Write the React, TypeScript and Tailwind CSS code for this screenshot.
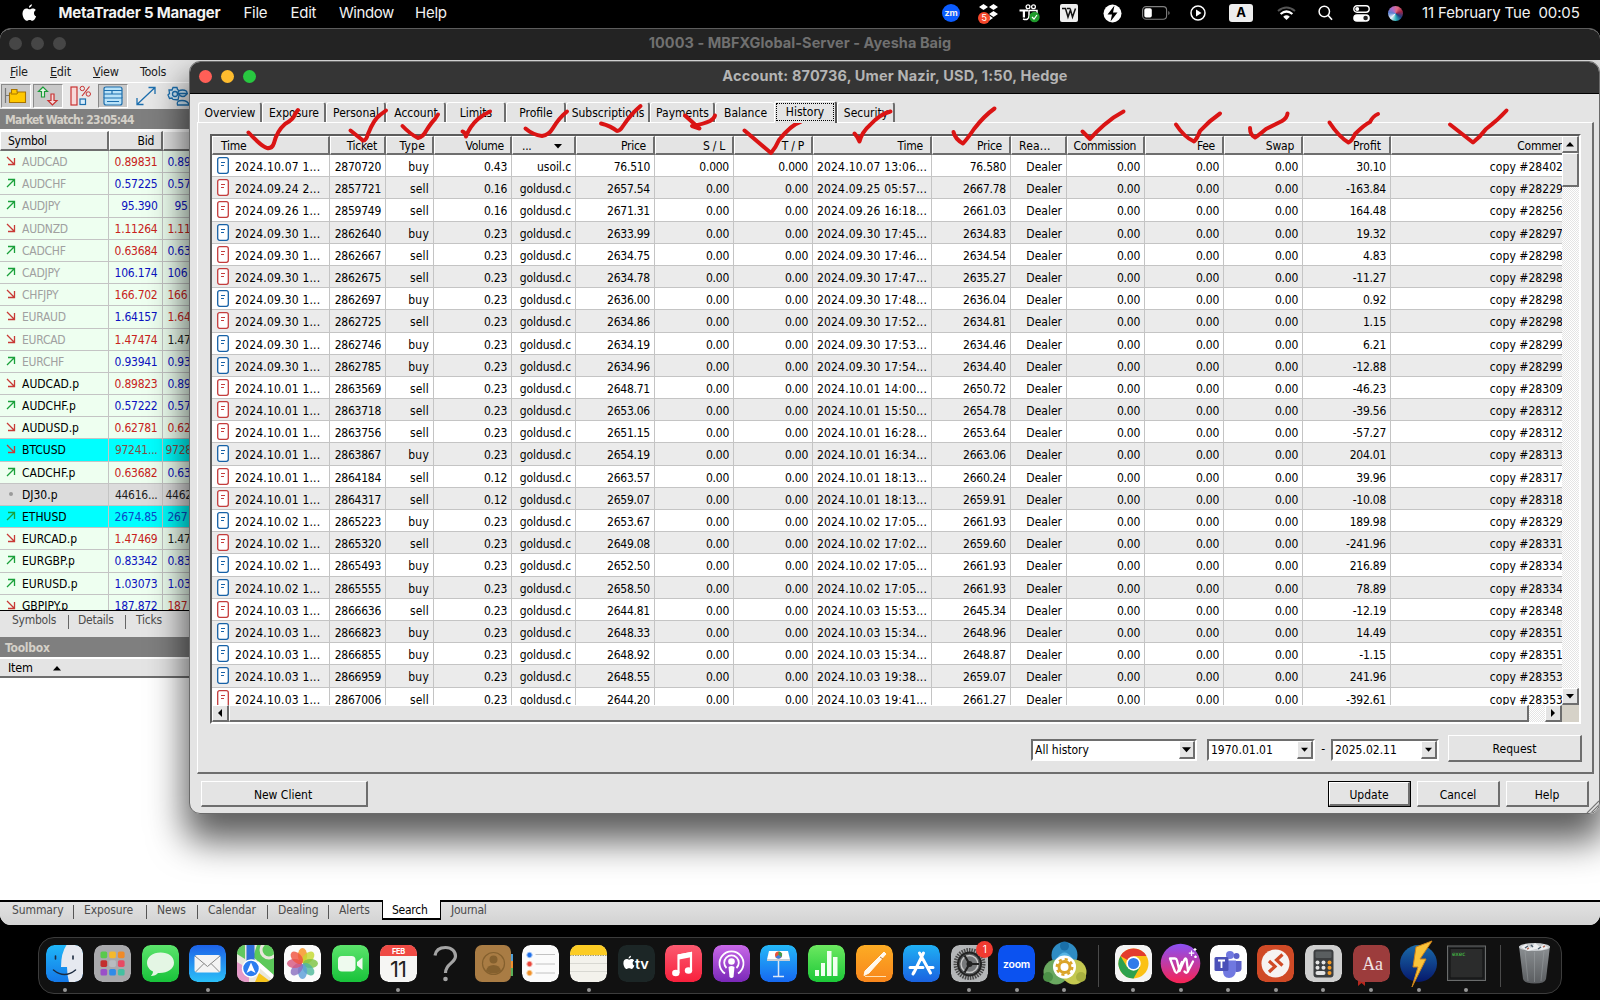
import React from "react";

type Deal = [string, string, string, string, string, string, string, string, string, string, string];

// open time, ticket, type, volume, symbol, open price, sl/tp, close time, close price, profit, comment
const deals: Deal[] = [
  ["2024.10.07 1...", "2870720", "buy", "0.43", "usoil.c", "76.510", "0.000", "2024.10.07 13:06...", "76.580", "30.10", "28402"],
  ["2024.09.24 2...", "2857721", "sell", "0.16", "goldusd.c", "2657.54", "0.00", "2024.09.25 05:57...", "2667.78", "-163.84", "28229"],
  ["2024.09.26 1...", "2859749", "sell", "0.16", "goldusd.c", "2671.31", "0.00", "2024.09.26 16:18...", "2661.03", "164.48", "28256"],
  ["2024.09.30 1...", "2862640", "buy", "0.23", "goldusd.c", "2633.99", "0.00", "2024.09.30 17:45...", "2634.83", "19.32", "28297"],
  ["2024.09.30 1...", "2862667", "sell", "0.23", "goldusd.c", "2634.75", "0.00", "2024.09.30 17:46...", "2634.54", "4.83", "28298"],
  ["2024.09.30 1...", "2862675", "sell", "0.23", "goldusd.c", "2634.78", "0.00", "2024.09.30 17:47...", "2635.27", "-11.27", "28298"],
  ["2024.09.30 1...", "2862697", "buy", "0.23", "goldusd.c", "2636.00", "0.00", "2024.09.30 17:48...", "2636.04", "0.92", "28298"],
  ["2024.09.30 1...", "2862725", "sell", "0.23", "goldusd.c", "2634.86", "0.00", "2024.09.30 17:52...", "2634.81", "1.15", "28298"],
  ["2024.09.30 1...", "2862746", "buy", "0.23", "goldusd.c", "2634.19", "0.00", "2024.09.30 17:53...", "2634.46", "6.21", "28299"],
  ["2024.09.30 1...", "2862785", "buy", "0.23", "goldusd.c", "2634.96", "0.00", "2024.09.30 17:54...", "2634.40", "-12.88", "28299"],
  ["2024.10.01 1...", "2863569", "sell", "0.23", "goldusd.c", "2648.71", "0.00", "2024.10.01 14:00...", "2650.72", "-46.23", "28309"],
  ["2024.10.01 1...", "2863718", "sell", "0.23", "goldusd.c", "2653.06", "0.00", "2024.10.01 15:50...", "2654.78", "-39.56", "28312"],
  ["2024.10.01 1...", "2863756", "sell", "0.23", "goldusd.c", "2651.15", "0.00", "2024.10.01 16:28...", "2653.64", "-57.27", "28312"],
  ["2024.10.01 1...", "2863867", "buy", "0.23", "goldusd.c", "2654.19", "0.00", "2024.10.01 16:34...", "2663.06", "204.01", "28313"],
  ["2024.10.01 1...", "2864184", "sell", "0.12", "goldusd.c", "2663.57", "0.00", "2024.10.01 18:13...", "2660.24", "39.96", "28317"],
  ["2024.10.01 1...", "2864317", "sell", "0.12", "goldusd.c", "2659.07", "0.00", "2024.10.01 18:13...", "2659.91", "-10.08", "28318"],
  ["2024.10.02 1...", "2865223", "buy", "0.23", "goldusd.c", "2653.67", "0.00", "2024.10.02 17:05...", "2661.93", "189.98", "28329"],
  ["2024.10.02 1...", "2865320", "sell", "0.23", "goldusd.c", "2649.08", "0.00", "2024.10.02 17:02...", "2659.60", "-241.96", "28331"],
  ["2024.10.02 1...", "2865493", "buy", "0.23", "goldusd.c", "2652.50", "0.00", "2024.10.02 17:05...", "2661.93", "216.89", "28334"],
  ["2024.10.02 1...", "2865555", "buy", "0.23", "goldusd.c", "2658.50", "0.00", "2024.10.02 17:05...", "2661.93", "78.89", "28334"],
  ["2024.10.03 1...", "2866636", "sell", "0.23", "goldusd.c", "2644.81", "0.00", "2024.10.03 15:53...", "2645.34", "-12.19", "28348"],
  ["2024.10.03 1...", "2866823", "buy", "0.23", "goldusd.c", "2648.33", "0.00", "2024.10.03 15:34...", "2648.96", "14.49", "28351"],
  ["2024.10.03 1...", "2866855", "buy", "0.23", "goldusd.c", "2648.92", "0.00", "2024.10.03 15:34...", "2648.87", "-1.15", "28351"],
  ["2024.10.03 1...", "2866959", "buy", "0.23", "goldusd.c", "2648.55", "0.00", "2024.10.03 19:38...", "2659.07", "241.96", "28353"],
  ["2024.10.03 1...", "2867006", "sell", "0.23", "goldusd.c", "2644.20", "0.00", "2024.10.03 19:41...", "2661.27", "-392.61", "28353"],
];

const R = "text-[#c8231c]";
const B = "text-[#0c12c0]";
const K = "text-[#1c1c1c]";
const QM = "bg-[#eefff0]";

// symbol, dimmed, direction, bid, bid colour, ask, ask colour, row background
const quotes: [string, boolean, "up" | "down" | "none", string, string, string, string, string][] = [
  ["AUDCAD", true, "down", "0.89831", R, "0.89", B, QM],
  ["AUDCHF", true, "up", "0.57225", B, "0.57", B, QM],
  ["AUDJPY", true, "up", "95.390", B, "95", B, QM],
  ["AUDNZD", true, "down", "1.11264", R, "1.11", R, QM],
  ["CADCHF", true, "up", "0.63684", R, "0.63", B, QM],
  ["CADJPY", true, "up", "106.174", B, "106", B, QM],
  ["CHFJPY", true, "down", "166.702", R, "166", R, QM],
  ["EURAUD", true, "down", "1.64157", B, "1.64", R, QM],
  ["EURCAD", true, "down", "1.47474", R, "1.47", K, QM],
  ["EURCHF", true, "up", "0.93941", B, "0.93", B, QM],
  ["AUDCAD.p", false, "down", "0.89823", R, "0.89", B, QM],
  ["AUDCHF.p", false, "up", "0.57222", B, "0.57", B, QM],
  ["AUDUSD.p", false, "down", "0.62781", R, "0.62", R, QM],
  ["BTCUSD", false, "down", "97241...", "text-[#845046]", "9728", "text-[#845046]", "bg-[#00ffff]"],
  ["CADCHF.p", false, "up", "0.63682", R, "0.63", B, QM],
  ["DJ30.p", false, "none", "44616...", K, "4462", K, "bg-[#dcdcdc]"],
  ["ETHUSD", false, "up", "2674.85", "text-[#0b48c8]", "267", "text-[#0b48c8]", "bg-[#00ffff]"],
  ["EURCAD.p", false, "down", "1.47469", R, "1.47", K, QM],
  ["EURGBP.p", false, "up", "0.83342", B, "0.83", B, QM],
  ["EURUSD.p", false, "up", "1.03073", B, "1.03", B, QM],
  ["GBPJPY.p", false, "down", "187.872", B, "187", R, QM],
];

const RAISED = "border-t border-l border-t-white border-l-white border-r-2 border-b-2 border-r-[#6e6e6e] border-b-[#6e6e6e] bg-[#e4e4e4]";

const columns: [string, string][] = [
  ["Time", "w-[118px] justify-start pl-2"],
  ["Ticket", "w-[56px] justify-end pr-[7px]"],
  ["Type", "w-[48px] justify-end pr-[7px] tracking-[0.200px]"],
  ["Volume", "w-[78px] justify-end pr-[6px]"],
  ["...", "w-[64px] justify-between pl-[9px] pr-[12px]"],
  ["Price", "w-[79px] justify-end pr-[7px]"],
  ["S / L", "w-[79px] justify-end pr-[7px]"],
  ["T / P", "w-[79px] justify-end pr-[7px]"],
  ["Time", "w-[119px] justify-end pr-[7px]"],
  ["Price", "w-[79px] justify-end pr-[7px]"],
  ["Rea...", "w-[56px] justify-start pl-[7px] tracking-[0.200px]"],
  ["Commission", "w-[78px] justify-end pr-[7px] tracking-[-0.350px]"],
  ["Fee", "w-[79px] justify-end pr-[7px]"],
  ["Swap", "w-[79px] justify-end pr-[7px]"],
  ["Profit", "w-[88px] justify-end pr-[8px] tracking-[0px]"],
  ["Commer", "w-[173px] justify-end pr-0"],
];

const cell = "shrink-0 border-r border-[#c4c4c4] text-right pr-[4px] whitespace-nowrap overflow-hidden";

function TradeIcon({ sell }: { sell: boolean }) {
  const c = sell ? "#c43c3c" : "#1661a6";
  return (
    <svg width="12" height="17" viewBox="0 0 12 17" className="shrink-0">
      <rect x="0.7" y="0.7" width="10.6" height="15.6" rx="2" fill="#fff" stroke={c} strokeWidth="1.3" />
      <path d="M4 5.5H8M4 8.5H7" stroke={c} strokeWidth="1.1" />
    </svg>
  );
}

function DealRow({ d, odd }: { d: Deal; odd: boolean }) {
  return (
    <div className={`flex h-[22.2px] shrink-0 border-b border-[#c4c4c4] leading-[24px] ${odd ? "bg-[#ebebeb]" : "bg-white"}`}>
      <div className="flex w-[118px] shrink-0 items-start gap-[6px] overflow-hidden whitespace-nowrap border-r border-[#c4c4c4] pl-[5px] pt-[2px] leading-[20px]">
        <TradeIcon sell={d[2] === "sell"} />
        <span className="tracking-[0.200px]">{d[0]}</span>
      </div>
      <div className={`${cell} w-[56px]`}>{d[1]}</div>
      <div className={`${cell} w-[48px] tracking-[0.200px]`}>{d[2]}</div>
      <div className={`${cell} w-[78px]`}>{d[3]}</div>
      <div className={`${cell} w-[64px] tracking-[-0.080px]`}>{d[4]}</div>
      <div className={`${cell} w-[79px]`}>{d[5]}</div>
      <div className={`${cell} w-[79px]`}>{d[6]}</div>
      <div className={`${cell} w-[79px]`}>{d[6]}</div>
      <div className={`${cell} w-[119px] tracking-[0.180px]`}>{d[7]}</div>
      <div className={`${cell} w-[79px]`}>{d[8]}</div>
      <div className={`${cell} w-[56px] tracking-[0px]`}>Dealer</div>
      <div className={`${cell} w-[78px]`}>0.00</div>
      <div className={`${cell} w-[79px]`}>0.00</div>
      <div className={`${cell} w-[79px]`}>0.00</div>
      <div className={`${cell} w-[88px]`}>{d[9]}</div>
      <div className="w-[172px] shrink-0 whitespace-nowrap text-right tracking-[0.050px]">copy #{d[10]}</div>
    </div>
  );
}

function Tri({ dir, s = 8 }: { dir: "up" | "down" | "left" | "right"; s?: number }) {
  const p = { up: "M0 6.5L4 2L8 6.5Z", down: "M0 2L4 6.5L8 2Z", left: "M6 0L2 4L6 8Z", right: "M2 0L6 4L2 8Z" }[dir];
  return (
    <svg width={s} height={s} viewBox="0 0 8 8">
      <path d={p} fill="#000" />
    </svg>
  );
}

function AppleLogo({ w }: { w: number }) {
  return (
    <svg width={w} height={w * 1.2} viewBox="0 0 15 18" fill="#fff">
      <path d="M10.3 0.3c.1 1.8-1.4 3.5-3.1 3.5C7 2.100 8.500.5 10.300.3zM12.400 9.500c0-1.600 1-2.600 1.900-3.200-.9-1.300-2.200-1.700-3.200-1.700-1.400 0-2.200.8-3.200.8S6 4.600 4.700 4.600C2.500 4.600.5 6.600.5 9.800c0 3.500 2.300 7.500 4.300 7.500 1 0 1.600-.8 3.100-.8s1.900.8 3 .8c1.600 0 3.100-2.500 3.700-4.500-1.200-.5-2.200-1.600-2.200-3.300z" />
    </svg>
  );
}

function MenuBar() {
  return (
    <div className="flex h-[28px] items-center bg-black pb-[2px] font-['Inter'] text-[15px] text-[#f2f2f2]">
      <div className="ml-[22px]"><AppleLogo w={14.5} /></div>
      <span className="ml-[22px] w-[162px] whitespace-nowrap font-bold tracking-[-0.220px]">MetaTrader 5 Manager</span>
      <span className="ml-[23px] w-[47px]">File</span>
      <span className="w-[48.500px]">Edit</span>
      <span className="w-[76px] tracking-[-0.450px]">Window</span>
      <span>Help</span>
      <div className="flex-1" />
      <div className="flex items-center">
        <div className="flex h-[18px] w-[18px] items-center justify-center rounded-full bg-[#0b5cff] text-[9px] font-bold">zm</div>
        <svg className="ml-[18px]" width="21" height="21" viewBox="0 0 21 21">
          <path d="M5.500 1L10 4L5.500 7L1 4ZM15.500 1L20 4L15.500 7L11 4ZM15.500 8L20 11L15.500 14L11 11ZM10.500 12L15 15L10.500 18L6 15Z" fill="#fff" />
          <circle cx="6" cy="15" r="6" fill="#f4472b" />
          <text x="6" y="18.400" fontSize="9.500" fill="#fff" textAnchor="middle" fontFamily="Inter">5</text>
        </svg>
        <svg className="ml-[20px]" width="21" height="19" viewBox="0 0 21 19">
          <path d="M0.500 5.500H9V7.500H6V13.500H3.800V7.500H0.500Z" fill="#fff" />
          <path d="M10 6.500H18V11M10 6V12Q9.500 17 4 15" stroke="#fff" strokeWidth="1.500" fill="none" />
          <circle cx="9" cy="2.800" r="1.900" fill="none" stroke="#fff" strokeWidth="1.300" />
          <circle cx="14.500" cy="2.800" r="1.900" fill="none" stroke="#fff" strokeWidth="1.300" />
          <circle cx="15.500" cy="13" r="5.200" fill="#1f9b2c" />
          <path d="M13 13L15 15L18 11" stroke="#fff" strokeWidth="1.200" fill="none" />
        </svg>
        <svg className="ml-[20px]" width="18" height="18" viewBox="0 0 18 18">
          <rect width="18" height="18" rx="2" fill="#eee" />
          <path d="M2 4.500H5.500L8 13L10.500 6L12.500 13L15.500 4.500M7 4.500H10" stroke="#111" strokeWidth="1.500" fill="none" />
        </svg>
        <svg className="ml-[25px]" width="19" height="19" viewBox="0 0 19 19">
          <circle cx="9.500" cy="9.500" r="9" fill="#fff" />
          <path d="M11.500 1.500L4.500 10.500H9L7.500 17.500L14.500 8.500H10Z" fill="#000" />
        </svg>
        <svg className="ml-[20px]" width="28" height="14" viewBox="0 0 28 14">
          <rect x="0.600" y="0.600" width="24" height="12.600" rx="3.500" fill="none" stroke="#808080" strokeWidth="1.100" />
          <rect x="2.300" y="2.300" width="7.500" height="9.200" rx="1.800" fill="#fff" />
          <path d="M26.300 5V9Q27.600 8.500 27.600 7T26.300 5" fill="#808080" />
        </svg>
        <svg className="ml-[20px]" width="16" height="16" viewBox="0 0 16 16">
          <circle cx="8" cy="8" r="7" fill="none" stroke="#fff" strokeWidth="1.500" />
          <path d="M6 4.500L11.500 8L6 11.500Z" fill="#fff" />
        </svg>
        <div className="ml-[23px] flex h-[18px] w-[24px] items-center justify-center rounded-[3px] bg-[#eee] text-[13px] font-bold text-black">A</div>
        <svg className="ml-[24px]" width="19" height="15" viewBox="0 0 19 15">
          <path d="M1 5Q9.500-2 18 5" stroke="#555" strokeWidth="2" fill="none" />
          <path d="M3.600 8Q9.500 3 15.400 8" stroke="#fff" strokeWidth="2.200" fill="none" />
          <path d="M9.500 14L6.200 10.700Q9.500 8 12.800 10.700Z" fill="#fff" />
        </svg>
        <svg className="ml-[22px]" width="15" height="16" viewBox="0 0 15 16">
          <circle cx="6.300" cy="6.500" r="5.200" fill="none" stroke="#fff" strokeWidth="1.500" />
          <path d="M10 10.300L14 14.800" stroke="#fff" strokeWidth="1.700" />
        </svg>
        <svg className="ml-[20px]" width="17" height="17" viewBox="0 0 17 17">
          <rect x="0.800" y="0.800" width="15.400" height="6.400" rx="3.200" fill="none" stroke="#fff" strokeWidth="1.400" />
          <circle cx="4.200" cy="4" r="2" fill="#fff" />
          <rect x="0.200" y="9.200" width="16.600" height="7.600" rx="3.800" fill="#fff" />
          <circle cx="12.600" cy="13" r="2.300" fill="#222" />
        </svg>
        <div className="ml-[18px] h-[15px] w-[15px] rounded-full bg-[conic-gradient(from_20deg,#e06a80,#a02848,#203c80,#2ab0b8,#e8f0f8,#5a80d0,#b06ac8,#e06a80)]" />
        <span className="ml-[19px] mr-[20px] w-[158px] whitespace-pre tracking-[-0.130px]">11 February Tue  00:05</span>
      </div>
    </div>
  );
}

function Toolbar() {
  const pressed = "border border-t-[#8a8a8a] border-l-[#8a8a8a] border-b-white border-r-white bg-[#c9c9c9]";
  return (
    <div className="flex h-[27px] items-center border-t border-white bg-[#e8e8e8] pl-px">
      <div className={`flex h-[24px] w-[30px] items-center justify-center ${pressed}`}>
        <svg width="24" height="18" viewBox="0 0 24 18">
          <path d="M1.500 1V16M1.500 8.500H5" stroke="#777" strokeWidth="1.200" />
          <path d="M5.500 6V15.500H21.500V5H13V2.500H7.500V6Z" fill="#ffc800" stroke="#a87400" strokeWidth="1.100" />
          <path d="M7 7H13L14 5" stroke="#a87400" fill="none" />
        </svg>
      </div>
      <div className={`ml-[2px] flex h-[24px] w-[30px] items-center justify-center ${pressed}`}>
        <svg width="22" height="20" viewBox="0 0 22 20" fill="#e8f5e8">
          <path d="M6 1L1.500 5.500H4.500V11H7.500V5.500H10.500Z" stroke="#1a9a38" strokeWidth="1.200" />
          <path d="M15.500 19L11 14.500H14V8H17V14.500H20Z" stroke="#c83232" strokeWidth="1.200" fill="#f6dada" />
        </svg>
      </div>
      <svg className="ml-[7px]" width="22" height="22" viewBox="0 0 22 22">
        <rect x="1" y="2" width="6" height="18" fill="#f7d9d9" stroke="#c83232" strokeWidth="1.200" />
        <rect x="10" y="14" width="5.500" height="5.500" fill="#d7ecfa" stroke="#1d6fae" strokeWidth="1.200" />
        <path d="M19.500 1.500L12 11" stroke="#c83232" strokeWidth="1.200" />
        <circle cx="12.300" cy="3.500" r="2.200" fill="none" stroke="#c83232" />
        <circle cx="18.300" cy="9" r="2.200" fill="none" stroke="#c83232" />
      </svg>
      <div className={`ml-[6px] flex h-[24px] w-[30px] items-center justify-center ${pressed}`}>
        <svg width="20" height="20" viewBox="0 0 20 20" fill="#b9e2f8" stroke="#1d6fae" strokeWidth="1.200">
          <path d="M1 12V3Q1 1 3 1H17Q19 1 19 3V12M1 4.500H19M9 4.500V8M1 8H19" />
          <path d="M1 12H19V17Q19 19 17 19H3Q1 19 1 17Z" />
          <path d="M4 15.500H16" />
        </svg>
      </div>
      <svg className="ml-[7px]" width="22" height="20" viewBox="0 0 22 20" fill="none" stroke="#1d6fae" strokeWidth="1.300">
        <path d="M2 18.500L20 1.500M13.500 1.500H20V8M2 12V18.500H8.500" />
      </svg>
      <svg className="ml-[10px]" width="24" height="20" viewBox="0 0 24 20" fill="#cfe6f5" stroke="#1d6fae" strokeWidth="1.300">
        <path d="M6 1.500H10L10.500 3.500L13 5L11 14L6 13.500L5 12L2.500 12.500L1 9L2.500 7.500L2 4L5 4Z" />
        <circle cx="8" cy="8" r="2.500" />
        <path d="M11 7C11 3 20 3 20 7M10 7.500H21M11.500 8Q16 13 20 8" />
        <path d="M10.500 19Q9 14.500 15 14.500T22 19Z" />
      </svg>
    </div>
  );
}

function QuoteArrow({ dir }: { dir: "up" | "down" | "none" }) {
  if (dir === "none") return <span className="ml-[9px] mr-[9px] mt-[8px] h-[4px] w-[4px] shrink-0 rounded-full bg-[#9a9a9a]" />;
  return (
    <svg className="ml-[6px] mr-[6px] mt-[5px] shrink-0" width="10" height="10" viewBox="0 0 10 10" fill="none" strokeWidth="1.300" stroke={dir === "up" ? "#1aa03a" : "#c83a36"}>
      <path d={dir === "up" ? "M1 9L8.500 1.500M2 1.500H8.500V8" : "M1 1L8.500 8.500M2 8.500H8.500V2"} />
    </svg>
  );
}

function ManagerWindow() {
  const bottom = ["Summary", "Exposure", "News", "Calendar", "Dealing", "Alerts"];
  const widths = ["w-[62px]", "w-[73px]", "w-[51px]", "w-[70px]", "w-[61px]", "w-[53px]"];
  return (
    <div className="flex h-[897px] w-[1600px] flex-col overflow-hidden rounded-t-[11px] rounded-b-[11px] border-t border-[#5c5c5c] bg-white">
      <div className="relative flex h-[31px] shrink-0 items-center justify-center bg-[#232323] pb-[3px]">
        <div className="absolute left-[9px] top-[8px] flex gap-[9px]">
          <span className="h-[13px] w-[13px] rounded-full bg-[#464646]" />
          <span className="h-[13px] w-[13px] rounded-full bg-[#464646]" />
          <span className="h-[13px] w-[13px] rounded-full bg-[#464646]" />
        </div>
        <span className="whitespace-nowrap font-['Inter'] text-[14.500px] font-bold tracking-[0.060px] text-[#707070]">10003 - MBFXGlobal-Server - Ayesha Baig</span>
      </div>
      <div className="flex h-[22px] shrink-0 items-center bg-[#e8e8e8] pl-[10px] pt-[2px] text-[12.500px] text-[#1c1c1c]">
        <span className="w-[40px]"><u>F</u>ile</span>
        <span className="w-[43px]"><u>E</u>dit</span>
        <span className="w-[47px]"><u>V</u>iew</span>
        <span>Tools</span>
      </div>
      <Toolbar />
      <div className="flex h-[20px] shrink-0 items-center bg-[#7f7f7f] pl-[5px] pt-px text-[12px] font-bold tracking-[-0.800px] text-[#d4d0c8]">Market Watch: 23:05:44</div>
      <div className="mt-[2px] flex h-[20px] w-[200px] shrink-0 overflow-hidden text-[12px]">
        <div className={`w-[109px] shrink-0 ${RAISED} pl-[7px] leading-[18px]`}>Symbol</div>
        <div className={`w-[54px] shrink-0 ${RAISED} pr-[7px] text-right leading-[18px]`}>Bid</div>
        <div className={`w-[80px] shrink-0 ${RAISED}`} />
      </div>
      <div className="flex h-[460px] w-[200px] shrink-0 flex-col overflow-hidden border-b border-black bg-[#eefff0]">
        {quotes.map((q, i) => (
          <div key={i} className={`flex h-[22.200px] shrink-0 border-b border-[#c4c4c4] leading-[22px] ${q[7]}`}>
            <div className="flex w-[108.500px] shrink-0 border-r border-[#c4c4c4]">
              <QuoteArrow dir={q[2]} />
              <span className={q[1] ? "tracking-[-0.250px] text-[#a0a0a0]" : "tracking-[0px] text-black"}>{q[0]}</span>
            </div>
            <div className={`w-[54px] shrink-0 border-r border-[#c4c4c4] pr-[4px] text-right ${q[4]}`}>{q[3]}</div>
            <div className={`w-[30px] shrink-0 ${q[5] === "95" ? "pl-[12px]" : q[7] === QM || q[5] === "267" ? "pl-[5px]" : "pl-[3px]"} ${q[6]}`}>{q[5]}</div>
          </div>
        ))}
      </div>
      <div className="flex h-[26px] w-[200px] shrink-0 bg-[#e4e4e4] pl-[12px] leading-[19px] text-[#4c4c4c]">
        <span className="w-[56px]">Symbols</span>
        <span className="mt-[4px] h-[14px] w-[10px] border-l border-[#666]" />
        <span className="w-[47px]">Details</span>
        <span className="mt-[4px] h-[14px] w-[11px] border-l border-[#666]" />
        <span>Ticks</span>
      </div>
      <div className="flex h-[20px] w-[200px] shrink-0 items-center bg-[#7f7f7f] pl-[5px] pt-px text-[12px] font-bold tracking-[-0.250px] text-[#d4d0c8]">Toolbox</div>
      <div className="mt-[2px] flex h-[19px] w-[200px] shrink-0 items-center gap-[20px] border-b-2 border-[#6e6e6e] bg-[#e4e4e4] pl-[8px] pt-px text-[12.500px]">
        Item <Tri dir="up" s={8} />
      </div>
      <div className="flex-1" />
      <div className="flex h-[25px] shrink-0 border-t-2 border-black bg-gradient-to-b from-[#e2e2e2] to-[#d2d2d2] pl-[12px] leading-[17px] text-[#4c4c4c]">
        {bottom.map((b, i) => (
          <div key={b} className={`flex shrink-0 ${widths[i]} ${i === 0 ? "" : "pl-[10px]"}`}>
            <span className="flex-1 tracking-[-0.100px]">{b}</span>
            {i < 5 && <span className="mt-[3px] h-[14px] w-px bg-[#555]" />}
          </div>
        ))}
        <div className="mt-[-2px] h-[20px] w-[59px] shrink-0 border-x border-b-2 border-black bg-white pl-[9px] leading-[20px] text-black">Search</div>
        <span className="pl-[10px]">Journal</span>
      </div>
    </div>
  );
}

const dlgTabs: [string, string][] = [
  ["Overview", "w-[64px]"],
  ["Exposure", "w-[64px]"],
  ["Personal", "w-[60px]"],
  ["Account", "w-[60px]"],
  ["Limits", "w-[60px]"],
  ["Profile", "w-[60px]"],
  ["Subscriptions", "w-[84px]"],
  ["Payments", "w-[65px]"],
  ["Balance", "w-[59px]"],
];
const tabCls = "mt-px h-[20px] shrink-0 rounded-t-[3px] border-t border-l border-white pl-px text-center leading-[20px] tracking-[0px]";

function Combo({ text, w, s }: { text: string; w: string; s: number }) {
  return (
    <div className={`flex h-[22px] ${w} border-2 border-t-[#6e6e6e] border-l-[#6e6e6e] border-b-white border-r-white bg-white`}>
      <span className="flex-1 whitespace-nowrap pl-[2px] leading-[19px] tracking-[0px]">{text}</span>
      <div className={`flex w-[16px] items-center justify-center ${RAISED}`}><Tri dir="down" s={s} /></div>
    </div>
  );
}

const scrollTrack = "bg-[repeating-conic-gradient(#ffffff_0_25%,#e4e4e4_0_50%)] bg-[length:2px_2px]";

function AccountDialog() {
  return (
    <div className="absolute left-[189px] top-[61px] flex h-[753px] w-[1411px] flex-col overflow-hidden rounded-[11px] border border-[#6a6a6a] bg-[#e4e4e4]">
      <div className="relative flex h-[32px] shrink-0 items-center justify-center border-b border-black bg-[#353535] pb-[3px]">
        <div className="absolute left-[9px] top-[8px] flex gap-[9px]">
          <span className="h-[13px] w-[13px] rounded-full bg-[#ff5f57]" />
          <span className="h-[13px] w-[13px] rounded-full bg-[#febc2e]" />
          <span className="h-[13px] w-[13px] rounded-full bg-[#28c840]" />
        </div>
        <span className="whitespace-nowrap pl-px font-['Inter'] text-[14.500px] font-bold tracking-[0.170px] text-[#b4b4b4]">Account: 870736, Umer Nazir, USD, 1:50, Hedge</span>
      </div>
      <div className="mt-[7px] flex h-[21px] shrink-0 pl-[8px]">
        {dlgTabs.map(([t, w], i) => (
          <div key={t} className={`${tabCls} ${w} ${i < 8 ? "border-r-2 border-r-[#6e6e6e]" : ""}`}>{t}</div>
        ))}
        <div className="relative z-10 h-[22px] w-[63px] shrink-0 rounded-t-[3px] border-l border-t border-r-2 border-white border-r-[#555] bg-[#e4e4e4] p-px">
          <div className="h-[18px] border border-dotted border-black text-center leading-[16px] tracking-[0px]">History</div>
        </div>
        <div className={`${tabCls} w-[58px] border-r-2 border-r-[#6e6e6e]`}>Security</div>
      </div>
      <div className="ml-[7px] flex h-[652px] w-[1397px] shrink-0 flex-col border-b-2 border-l border-r-2 border-t border-b-[#6e6e6e] border-l-white border-r-[#6e6e6e] border-t-white pl-[12px] pt-[11px]">
        <div className="flex h-[590px] w-[1371px] shrink-0 flex-col border-b-2 border-l-2 border-r-2 border-t-2 border-b-white border-l-[#5c5c5c] border-r-white border-t-[#5c5c5c]">
          <div className="flex h-[569px] shrink-0">
            <div className="flex w-[1350px] flex-col overflow-hidden bg-white">
              <div className="flex h-[19px] shrink-0">
                {columns.map(([t, w], i) => (
                  <div key={i} className={`flex shrink-0 items-center pt-[2px] ${RAISED} ${w} ${i === 15 ? "border-r-0" : ""}`}>
                    {t}
                    {t === "..." && <Tri dir="down" />}
                  </div>
                ))}
              </div>
              {deals.map((d, i) => (
                <DealRow key={d[1]} d={d} odd={i % 2 === 1} />
              ))}
            </div>
            <div className={`flex w-[17px] flex-col justify-between ${scrollTrack}`}>
              <div>
                <div className={`flex h-[17px] items-center justify-center ${RAISED}`}><Tri dir="up" /></div>
                <div className={`h-[34px] ${RAISED}`} />
              </div>
              <div className={`flex h-[17px] items-center justify-center ${RAISED}`}><Tri dir="down" /></div>
            </div>
          </div>
          <div className={`flex h-[17px] w-[1367px] shrink-0 ${scrollTrack}`}>
            <div className={`flex w-[17px] items-center justify-center ${RAISED}`}><Tri dir="left" /></div>
            <div className={`w-[1300px] ${RAISED}`} />
            <div className="flex-1" />
            <div className={`flex w-[17px] items-center justify-center ${RAISED}`}><Tri dir="right" /></div>
            <div className="w-[17px] bg-[#d6d2c8]" />
          </div>
        </div>
        <div className="mt-[11px] flex h-[27px] items-start justify-end pr-[10px]">
          <div className="mt-[4px]"><Combo text="All history" w="w-[166px]" s={9} /></div>
          <div className="ml-[10px] mt-[4px]"><Combo text="1970.01.01" w="w-[108px]" s={7} /></div>
          <span className="mt-[4px] w-[16px] text-center leading-[20px]">-</span>
          <div className="mt-[4px]"><Combo text="2025.02.11" w="w-[108px]" s={7} /></div>
          <div className={`ml-[9px] h-[27px] w-[134px] text-center leading-[26px] tracking-[0px] ${RAISED}`}>Request</div>
        </div>
      </div>
      <div className="mt-[7px] flex h-[26px] shrink-0 pl-[11px] pr-[10px] text-center leading-[26px] tracking-[0px]">
        <div className={`w-[167px] ${RAISED} pr-[2px]`}>New Client</div>
        <div className="flex-1" />
        <div className="w-[83px] border border-black"><div className={`h-full leading-[24px] ${RAISED}`}>Update</div></div>
        <div className={`ml-[6px] w-[83px] ${RAISED}`}>Cancel</div>
        <div className={`ml-[6px] w-[83px] ${RAISED}`}>Help</div>
      </div>
      <svg className="absolute bottom-0 right-0" width="14" height="14" viewBox="0 0 14 14" stroke="#777" strokeWidth="1.200">
        <path d="M2 14L14 2M6 14L14 6M10 14L14 10" />
      </svg>
    </div>
  );
}

function CheckMarks() {
  return (
    <svg className="pointer-events-none absolute left-0 top-0" width="1600" height="200" viewBox="0 0 1600 200" fill="none" stroke="#da1414" strokeWidth="4" strokeLinecap="round" strokeLinejoin="round">
      <path d="M248.500 132.500Q262 147 267 148Q272 149 274 143Q277 131 285 124Q294 119 295 114L298 110" />
      <path d="M350.500 130.500L363 140.500Q366 141 368 134Q374 119 380 115L386 110.500" />
      <path d="M402.500 126Q410 134 418 138Q423 137 426 131Q431 123 435 119L438 114.500" />
      <path d="M462.500 131.500Q465 132 466 136.500Q470 126 478 119Q484 114 490 111.500" />
      <path d="M525.500 128.500Q533 135 542 136Q549 135 553 128Q559 118 567 111.500" />
      <path d="M601 123.500Q611 126 617 131Q620 131 623 126Q631 114 640.500 106" />
      <path d="M685 115.500L699.500 128.500L692 126Q704 124 710 121Q714 119 715 115.500" />
      <path d="M744.500 130.500L771 153Q776 147 779 140Q791 125 801 121.500" />
      <path d="M854.500 133.500Q858 137 859.500 141.500Q862 132 870 125Q880 114 890.500 111.500" />
      <path d="M953.500 132Q955 139 963 143.500Q968 138 974 129Q984 116 994.500 108.500" />
      <path d="M1082.500 131.500L1090 139Q1096 132 1104 125Q1113 117 1123.500 111.500" />
      <path d="M1176 124.500Q1184 137 1194 141.500Q1197 139 1200 131Q1209 121 1220 113.500" />
      <path d="M1250 128Q1250 135 1255 137.500Q1259 135 1266 129Q1274 125 1282 121Q1287 118 1287.500 113.500" />
      <path d="M1329.500 122.500Q1339 137 1348.500 142.500Q1352 141 1355 134Q1364 125 1370 122Q1373 116 1378 114" />
      <path d="M1450 124.500L1473 142.500Q1480 137 1486 129Q1498 120 1506.500 110.500" />
    </svg>
  );
}

// Each dock icon is drawn on a 37x37 rounded tile.
const rr = (fill: string, extra?: React.ReactNode) => (
  <g clipPath="url(#tile)">
    <rect width="37" height="37" rx="8.500" fill={fill} />
    {extra}
  </g>
);

const petals = ["#f7931e", "#c4d82e", "#7cc243", "#4fb89a", "#5b9fd8", "#8a6fc0", "#d6577f", "#ef5340"];
const launch = ["#5ac94c", "#f4b92d", "#f08a28", "#c22f2f", "#b8bcc0", "#e84a62", "#9a4fc8", "#2f8be8", "#43c0a0"];

const dockIcons: { dot?: boolean; art: React.ReactNode; badge?: boolean; sep?: boolean }[] = [
  { dot: true, art: rr("url(#gFinder)", <>
    <path d="M20.500 0H28.500Q37 0 37 8.500V28.500Q37 37 28.500 37H23Q21 30 21 22H15Q15 8 20.500 0Z" fill="#e6e9f0" />
    <path d="M9.500 11V14M27 11V14" stroke="#1c2b40" strokeWidth="1.600" strokeLinecap="round" />
    <path d="M7.500 25Q18.500 34 29.500 25" stroke="#1c2b40" strokeWidth="1.500" fill="none" strokeLinecap="round" />
  </>) },
  { art: rr("#a9a9ac", <>{launch.map((c, i) => <rect key={i} x={6.5 + (i % 3) * 8.7} y={6.5 + Math.floor(i / 3) * 8.7} width="6.700" height="6.700" rx="1.600" fill={c} />)}</>) },
  { art: rr("url(#gGreen)", <path d="M18.500 7.500C10.500 7.500 5 12 5 17.800C5 21.500 7.200 24.800 11 26.600C11 28.500 10 30 8.800 31C12 31 14.500 29.800 16 28C25.500 28.500 32 24 32 17.800S26.500 7.500 18.500 7.500Z" fill="#e4f6e4" />) },
  { dot: true, art: rr("url(#gMail)", <>
    <rect x="5.500" y="10" width="26" height="17.500" rx="2.500" fill="#f4f4f4" />
    <path d="M6 11L18.500 21.500L31 11M6.500 27L15 18.500M30.500 27L22 18.500" stroke="#888" strokeWidth="1" fill="none" />
  </>) },
  { art: rr("#e9e6dd", <>
    <path d="M20 0H37V30L16 12Z" fill="#5cc95a" />
    <path d="M0 9V0H8V14Z" fill="#62c860" />
    <circle cx="32" cy="5" r="8" fill="none" stroke="#e9e6dd" strokeWidth="3" />
    <path d="M0 17L12 24V37H0Z" fill="#e59ac8" />
    <path d="M22 28L34 37H18Z" fill="#f7c51e" />
    <path d="M20 18L38 34" stroke="#fff" strokeWidth="4" />
    <rect x="9.500" y="0" width="8" height="16" fill="#2f6fd8" />
    <circle cx="14" cy="23.500" r="8.500" fill="#2b7df0" stroke="#fff" strokeWidth="1.500" />
    <path d="M14 17.500L18.500 28L14 25.500L9.500 28Z" fill="#fff" />
  </>) },
  { art: rr("#fbfbfb", <>{petals.map((c, i) => <ellipse key={i} cx="18.500" cy="10.500" rx="4.600" ry="7.500" fill={c} opacity="0.820" transform={`rotate(${i * 45} 18.500 18.500)`} />)}</>) },
  { art: rr("url(#gGreen)", <><rect x="6" y="11" width="17.500" height="15.500" rx="4" fill="#eefaee" /><path d="M25 17L30.500 12.500V25L25 20.500Z" fill="#eefaee" /></>) },
  { dot: true, art: rr("#f6f6f4", <>
    <path d="M0 11V0H37V11Z" fill="#ef4a44" />
    <text x="18.500" y="9" fontSize="7.500" fontWeight="700" fill="#fff" textAnchor="middle" fontFamily="Inter">FEB</text>
    <text x="18" y="31.500" fontSize="22" fill="#222" textAnchor="middle" fontFamily="Inter" letterSpacing="-1">11</text>
  </>) },
  { art: <><path d="M8 10.500C9 4 13 2.500 18.500 2.500C25 2.500 28.500 6.500 28.500 11C28.500 18.500 18.500 18 18.500 28" stroke="#a4a4a4" strokeWidth="3.200" fill="none" /><circle cx="18.500" cy="34" r="2.300" fill="#a4a4a4" /></> },
  { art: <>
    <path d="M33 9H38V16H33Z" fill="#4f9fd8" /><path d="M33 16H38V23H33Z" fill="#f09030" /><path d="M33 23H38V31H33Z" fill="#58b058" />
    <rect width="36" height="37" rx="7" fill="#a97c44" />
    <circle cx="18.500" cy="18.500" r="11" fill="none" stroke="#84602e" strokeWidth="1.200" />
    <circle cx="18.500" cy="14.500" r="4" fill="#84602e" /><path d="M11 26Q12 20 18.500 20T26 26Q18.500 31 11 26Z" fill="#84602e" />
  </> },
  { art: rr("#fbfbfb", <>
    <circle cx="7.500" cy="10" r="2.700" fill="#1e6fe8" stroke="#a8c8f8" /><circle cx="7.500" cy="19" r="2.700" fill="#e8443a" stroke="#f8b8b0" /><circle cx="7.500" cy="28" r="2.700" fill="#f09028" stroke="#f8d0a0" />
    <path d="M13.500 9.500H33M13.500 19H33M13.500 28H33" stroke="#c2c2c2" strokeWidth="1" />
  </>) },
  { dot: true, art: rr("#f3f2ec", <><path d="M0 10V0H37V10Z" fill="#fccc24" /><path d="M0 10.500H37" stroke="#a8a070" strokeDasharray="1.500 1" /><path d="M0 18.500H37M0 26.500H37" stroke="#d8d8d2" /></>) },
  { art: rr("#1c2626", <>
    <g transform="translate(5,10.500) scale(0.780)" fill="#fff"><path d="M10.300.3c.1 1.800-1.400 3.500-3.100 3.500C7 2.100 8.500.5 10.300.3zM12.400 9.500c0-1.600 1-2.600 1.900-3.200-.9-1.300-2.200-1.700-3.200-1.700-1.400 0-2.200.8-3.200.8S6 4.600 4.700 4.600C2.500 4.600.5 6.600.5 9.800c0 3.500 2.300 7.500 4.300 7.500 1 0 1.600-.8 3.100-.8s1.900.8 3 .8c1.600 0 3.100-2.500 3.700-4.500-1.200-.5-2.200-1.600-2.200-3.300z" /></g>
    <text x="17" y="24" fontSize="14.500" fontWeight="600" fill="#fff" fontFamily="Inter">tv</text>
  </>) },
  { art: rr("url(#gMusic)", <><path d="M13.500 28V10.500L26 8V25.500" stroke="#fff" strokeWidth="2.200" fill="none" /><path d="M13 9.500L27 6.700V12L13 14.800Z" fill="#fff" /><ellipse cx="10.800" cy="28" rx="3.700" ry="3.200" fill="#fff" /><ellipse cx="23.500" cy="25.500" rx="3.700" ry="3.200" fill="#fff" /></>) },
  { art: rr("url(#gPod)", <>
    <path d="M12 28.500A12 12 0 1 1 25 28.500" stroke="#fff" strokeWidth="1.800" fill="none" /><path d="M13.500 23A7.300 7.300 0 1 1 23.500 23" stroke="#fff" strokeWidth="1.800" fill="none" />
    <circle cx="18.500" cy="16.500" r="3.300" fill="#fff" /><path d="M15.500 22Q18.500 20 21.500 22L20.500 32Q18.500 34 16.500 32Z" fill="#fff" />
  </>) },
  { art: rr("url(#gKey)", <><path d="M9 6H28L30 14.500H7Z" fill="#fff" /><rect x="7" y="14" width="23" height="2" fill="#c8d0d8" /><circle cx="18.500" cy="10" r="3.500" fill="#e8503c" /><path d="M18.500 10V6.500A3.500 3.500 0 0 1 21.500 12Z" fill="#38a050" /><path d="M18.500 10L15.500 12A3.500 3.500 0 0 0 21.500 12Z" fill="#3c80e0" /><path d="M18.500 16V31M13 31.500H24" stroke="#d8e8f8" strokeWidth="1.500" /></>) },
  { art: rr("url(#gNum)", <path d="M7 25H11V31H7ZM13 18H17V31H13ZM19 6H23.500V31H19ZM25 12H29.500V31H25Z" fill="#f0fff0" />) },
  { art: rr("url(#gPages)", <><path d="M28 7L30 9L13 28L8 30.500L9 26Z" fill="#fff8ec" stroke="#fff8ec" /><path d="M9 31.500H30" stroke="#ffe0b0" /><path d="M24 12L27 14" stroke="#c08040" /></>) },
  { art: rr("url(#gApp)", <path d="M20.500 8L11 27.500M16.500 8L27.500 28M7 22.500H20M25 22.500H30M10 29L11 27" stroke="#fff" strokeWidth="3" strokeLinecap="round" fill="none" />) },
  { dot: true, badge: true, art: rr("#b4b6b8", <>
    <circle cx="18.500" cy="19" r="14" fill="none" stroke="#4a4a4a" strokeWidth="4" strokeDasharray="1.500 1" /><circle cx="18.500" cy="19" r="11.500" fill="#55585a" stroke="#222" strokeWidth="2" />
    <circle cx="18.500" cy="19" r="8.500" fill="#77797b" stroke="#c8c8c8" strokeWidth="1.500" /><circle cx="18.500" cy="19" r="3" fill="#222" />
    <path d="M18.500 19H28M18.500 19L13.500 10.500M18.500 19L13.500 27.500" stroke="#222" strokeWidth="2.200" />
  </>) },
  { dot: true, art: rr("#0b52f0", <text x="18.500" y="22.500" fontSize="10.500" fontWeight="600" fill="#fff" textAnchor="middle" fontFamily="Inter" letterSpacing="-0.300">zoom</text>) },
  { dot: true, art: <>
    <circle cx="18.500" cy="10" r="13" fill="#2f8cc4" /><circle cx="10" cy="27" r="12.500" fill="#6aa860" /><circle cx="28" cy="27" r="12.500" fill="#c4c850" />
    <circle cx="18.500" cy="1" r="4.500" fill="#1a6fa8" /><path d="M11 13Q18.500 2 26 13" fill="#58b4e4" /><circle cx="2" cy="32" r="5" fill="#4c9048" /><circle cx="35" cy="32" r="5" fill="#a8b040" />
    <circle cx="18.500" cy="22" r="11.500" fill="#fff" /><circle cx="18.500" cy="22" r="5.500" fill="none" stroke="#dba428" strokeWidth="3" /><circle cx="18.500" cy="22" r="7.800" fill="none" stroke="#dba428" strokeWidth="2.300" strokeDasharray="3.060 3.060" />
  </> },
  { sep: true, art: null },
  { dot: true, art: rr("#f4f4f4", <>
    <circle cx="18.500" cy="18.500" r="15" fill="#fbc116" /><path d="M18.500 18.500L5.500 11A15 15 0 0 1 31.500 11H18.500Z" fill="#e33b2e" /><path d="M5.500 11A15 15 0 0 0 18.500 33.500L25 22L12 22Z" fill="#2da14e" />
    <circle cx="18.500" cy="18.500" r="7.200" fill="#fff" /><circle cx="18.500" cy="18.500" r="5.600" fill="#2f7bea" />
  </>) },
  { dot: true, art: <>
    <circle cx="18.500" cy="18.500" r="19.800" fill="url(#gWps)" />
    <path d="M8 13.500H13Q14.500 13.500 15 15.500L17.500 26L22.500 14.500Q23.500 12.500 24.500 14.500L26 26L31 16.500M8 13.500L13 26.500Q14.500 29 16 26.500L20 17M22.500 26.500Q24.500 29 26 26.500" stroke="#fff" strokeWidth="2.300" fill="none" strokeLinejoin="round" strokeLinecap="round" />
    <path d="M29.500 5.500V11M26.800 8.200H32.300M33 3V6M31.500 4.500H34.500M33.500 10.500V13M32 11.800H35" stroke="#fff" strokeWidth="1.200" />
  </> },
  { dot: true, art: rr("#fdfdfd", <>
    <circle cx="26.500" cy="11" r="3" fill="#5b60c8" /><circle cx="20" cy="10" r="4" fill="#7078e0" /><path d="M22 16H31.500V24Q31 27.500 26 27Z" fill="#5b60c8" /><path d="M13 15.500H26V26Q25 33 19 33T13 26Z" fill="#7078e0" />
    <rect x="4.500" y="12" width="14" height="14" rx="1.500" fill="#4a50b8" /><path d="M8 15.500H15M11.500 15.500V23" stroke="#fff" strokeWidth="1.800" />
  </>) },
  { dot: true, art: rr("#d04a26", <><circle cx="18.500" cy="18.500" r="14" fill="#f6f3f2" /><path d="M12 16L18 21.500L12 27M25.500 9.500L19.500 15L25.500 20.500" stroke="#d04a26" strokeWidth="3.200" fill="none" /></>) },
  { dot: true, art: rr("#cfcfcf", <>
    <rect x="8.500" y="4.500" width="20" height="28" rx="3" fill="#3c3e40" /><rect x="10.500" y="6.500" width="16" height="6.500" rx="1" fill="#5a5e60" />
    {[0, 1, 2].map((r) => [0, 1, 2].map((c) => <circle key={`${r}${c}`} cx={12.5 + c * 6} cy={17.5 + r * 5.3} r="2" fill={c === 2 ? "#f59a23" : "#e4e4e4"} />))}
    <path d="M12.500 28.100H18.500" stroke="#e4e4e4" strokeWidth="4" />
  </>) },
  { dot: true, art: <><path d="M5 33H12V41L8.500 38L5 41Z" fill="#b8281e" />{rr("#9c3c3c")}<text x="19.500" y="24.500" fontSize="18" fill="#f0e4e4" textAnchor="middle" fontFamily="Liberation Serif">Aa</text></> },
  { dot: true, art: <><circle cx="18.500" cy="18.500" r="18.500" fill="url(#gBolt)" /><path d="M32-4L16 2L13 22H18L12 42L26 14H20Z" fill="#fbc43a" stroke="#d08418" /></> },
  { dot: true, art: <><rect x="-0.500" y="1" width="38" height="34.500" fill="#232526" stroke="#6a6c6c" /><rect x="2" y="3.500" width="33" height="29.500" fill="#2b2c2c" stroke="#111" /><text x="4" y="10.500" fontSize="6" fill="#48c848" fontFamily="DejaVu Sans Mono">exec</text></> },
  { sep: true, art: null },
  { art: <>
    <path d="M3 1L7 34Q8 38.500 18.500 38.500T30 34L34 1Z" fill="url(#gTrash)" /><ellipse cx="18.500" cy="2" rx="15.500" ry="4" fill="#c9cdd0" />
    <path d="M5 2L10-1L15 3L19-2L24 2L28-1L32 3L26 5L20 4L12 6L8 4Z" fill="#eef0f2" /><path d="M9 3L12 1M22 4L25 2M15 0L17 2" stroke="#4c5c6c" strokeWidth="1.500" /><path d="M11 4L13 3M27 2L29 1" stroke="#b8705c" strokeWidth="1.500" />
    <path d="M9 6L12 36M18.500 7V37M28 6L25 36" stroke="#a8acaf" strokeOpacity="0.400" />
  </> },
];

function Grad({ id, a, b }: { id: string; a: string; b: string }) {
  return <linearGradient id={id} x1="0" y1="0" x2="0" y2="1"><stop offset="0" stopColor={a} /><stop offset="1" stopColor={b} /></linearGradient>;
}

function Dock() {
  return (
    <div className="ml-[38px] mt-[12px] flex h-[57px] w-[1524px] items-start rounded-[16px] border border-[#3c3c3c] bg-[#111111] pl-[2.200px] pt-[7px]">
      <svg width="0" height="0" className="absolute">
        <defs>
          <clipPath id="tile"><rect width="37" height="37" rx="8.500" /></clipPath>
          <Grad id="gFinder" a="#1fb6f8" b="#1478e8" />
          <Grad id="gGreen" a="#5ce46c" b="#18c23a" />
          <Grad id="gMail" a="#1d62e8" b="#2cc0f8" />
          <Grad id="gMusic" a="#fb5a70" b="#f8203c" />
          <Grad id="gPod" a="#c868e8" b="#7a28b8" />
          <Grad id="gKey" a="#24b8f8" b="#1668f0" />
          <Grad id="gNum" a="#6ce860" b="#1cc838" />
          <Grad id="gPages" a="#fcac24" b="#f8861c" />
          <Grad id="gApp" a="#1fb0f4" b="#1a62e0" />
          <Grad id="gWps" a="#8a50f4" b="#f82454" />
          <Grad id="gBolt" a="#1a6aa8" b="#06186c" />
          <Grad id="gTrash" a="#8c9093" b="#5a5d60" />
        </defs>
      </svg>
      {dockIcons.map((d, i) =>
        d.sep ? (
          <div key={i} className="flex w-[21px] shrink-0 justify-center"><span className="h-[42px] w-px bg-[#4a4a4a]" /></div>
        ) : (
          <div key={i} className="relative flex w-[47.600px] shrink-0 flex-col items-center">
            <svg width="37" height="37" viewBox="0 0 37 37" className="overflow-visible">{d.art}</svg>
            {d.dot && <span className="mt-[6px] h-[4px] w-[4px] rounded-full bg-[#989898]" />}
            {d.badge && <span className="absolute right-0 top-[-4px] flex h-[17px] w-[17px] items-center justify-center rounded-full bg-[#f03a30] font-['Inter'] text-[10px] text-white">1</span>}
          </div>
        )
      )}
    </div>
  );
}

export default function App() {
  return (
    <div className="relative h-[1000px] w-[1600px] overflow-hidden bg-black font-['DejaVu_Sans_Condensed','DejaVu_Sans',sans-serif] text-[12px] tracking-[-0.250px] text-black">
      <MenuBar />
      <ManagerWindow />
      <div className="pointer-events-none absolute left-0 top-[60px] h-[840px] w-[1600px] overflow-hidden">
        <div className="absolute left-[190px] top-[1px] h-[753px] w-[1410px] rounded-[11px] shadow-[0_22px_36px_5px_rgba(0,0,0,0.640)]" />
      </div>
      <AccountDialog />
      <CheckMarks />
      <Dock />
    </div>
  );
}
